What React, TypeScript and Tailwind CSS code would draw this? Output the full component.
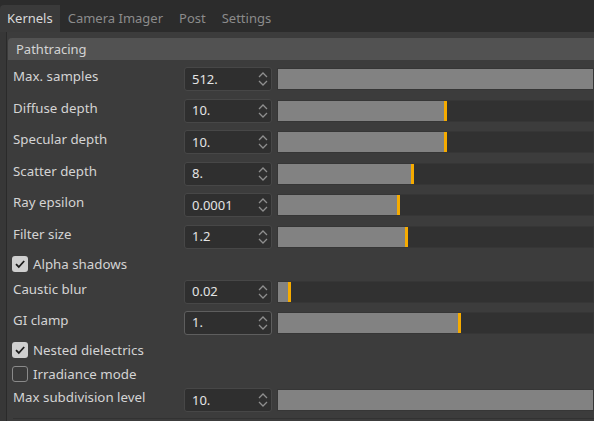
import React from 'react';

type Row =
  | { kind: 'slider'; label: string; value: string; fill: number; marker: boolean; h: string; focus?: boolean }
  | { kind: 'check'; label: string; checked: boolean; h: string };

const rows: Row[] = [
  { kind: 'slider', label: 'Max. samples', value: '512.', fill: 315, marker: false, h: 'h-[31.5px]' },
  { kind: 'slider', label: 'Diffuse depth', value: '10.', fill: 166, marker: true, h: 'h-[31.5px]' },
  { kind: 'slider', label: 'Specular depth', value: '10.', fill: 166, marker: true, h: 'h-[31.5px]' },
  { kind: 'slider', label: 'Scatter depth', value: '8.', fill: 133, marker: true, h: 'h-[31.5px]' },
  { kind: 'slider', label: 'Ray epsilon', value: '0.0001', fill: 119, marker: true, h: 'h-[31.5px]' },
  { kind: 'slider', label: 'Filter size', value: '1.2', fill: 127, marker: true, h: 'h-[31.5px]' },
  { kind: 'check', label: 'Alpha shadows', checked: true, h: 'h-[23.5px]' },
  { kind: 'slider', label: 'Caustic blur', value: '0.02', fill: 10, marker: true, h: 'h-[31px]' },
  { kind: 'slider', label: 'GI clamp', value: '1.', fill: 180, marker: true, h: 'h-[31px]', focus: true },
  { kind: 'check', label: 'Nested dielectrics', checked: true, h: 'h-[24px]' },
  { kind: 'check', label: 'Irradiance mode', checked: false, h: 'h-[24px]' },
  { kind: 'slider', label: 'Max subdivision level', value: '10.', fill: 315, marker: false, h: 'h-[28px]' },
];

const Spinner = () => (
  <svg width="12" height="18" viewBox="0 0 12 18" className="shrink-0">
    <path d="M2 7 L6 3 L10 7" fill="none" stroke="#8e8e8e" strokeWidth="1.3" />
    <path d="M2 11 L6 15 L10 11" fill="none" stroke="#8e8e8e" strokeWidth="1.3" />
  </svg>
);

const SpinBox = ({ value, focus }: { value: string; focus?: boolean }) => (
  <div
    className={`w-[88px] h-[24px] shrink-0 rounded-[3px] border bg-[#2f2f2f] flex items-center pl-[7px] pr-[2px] ${
      focus ? 'border-[#5e5e5e]' : 'border-[#474747]'
    }`}
  >
    <span className="flex-1 text-[13px] text-[#e4e4e4] leading-none">{value}</span>
    <Spinner />
  </div>
);

const Slider = ({ fill, marker }: { fill: number; marker: boolean }) => (
  <div className="flex-1 h-[22px] ml-[5px] mr-[1px] border border-[#363636] bg-[#313131] flex">
    <div className="h-full bg-[#828282]" style={{ width: fill }} />
    {marker && <div className="h-full w-[3px] bg-[#f6ab00]" />}
  </div>
);

const CheckBox = ({ checked }: { checked: boolean }) =>
  checked ? (
    <div className="w-[16px] h-[16px] rounded-[3px] bg-[#cfcfcf] flex items-center justify-center">
      <svg width="12" height="12" viewBox="0 0 12 12">
        <path d="M2 6.2 L4.8 9 L10.2 3" fill="none" stroke="#1c1c1c" strokeWidth="1.8" />
      </svg>
    </div>
  ) : (
    <div className="w-[16px] h-[16px] rounded-[3px] border border-[#8a8a8a] bg-[#3a3a3a]" />
  );

export default function App() {
  return (
    <div
      className="w-[594px] h-[421px] overflow-hidden bg-[#2c2c2c] flex flex-col"
      style={{ fontFamily: '"Noto Sans", "Noto Sans CJK KR", sans-serif' }}
    >
      {/* Tabs */}
      <div className="h-[32px] pt-[5px] flex items-stretch text-[13px] shrink-0">
        <div className="bg-[#3a3a3a] rounded-tl-[4px] px-[7px] pt-[1px] flex items-center text-[#d9d9d9]">Kernels</div>
        <div className="px-[8px] pt-[1px] flex items-center text-[#8b8b8b]">Camera Imager</div>
        <div className="px-[8px] pt-[1px] flex items-center text-[#8b8b8b]">Post</div>
        <div className="px-[8px] pt-[1px] flex items-center text-[#8b8b8b]">Settings</div>
      </div>

      {/* Body */}
      <div className="flex-1 flex">
        <div className="w-[7px] bg-[#373737] border-r border-[#2a2a2a] shrink-0" />
        <div className="flex-1 bg-[#3c3c3c] pt-[6px] pl-[1px] flex flex-col">
          <div className="h-[22px] bg-[#525252] rounded-tl-[4px] pl-[8px] pt-[2px] flex items-center text-[13px] text-[#d4d4d4]">
            Pathtracing
          </div>
          <div className="pt-[3.5px] flex flex-col">
            {rows.map((r) =>
              r.kind === 'slider' ? (
                <div key={r.label} className={`${r.h} flex items-center`}>
                  <div className="w-[176px] shrink-0 pl-[5px] pb-[6px] text-[13.3px] text-[#d4d4d4] leading-[18px]">
                    {r.label}
                  </div>
                  <SpinBox value={r.value} focus={r.focus} />
                  <Slider fill={r.fill} marker={r.marker} />
                </div>
              ) : (
                <div key={r.label} className={`${r.h} flex items-center pl-[4px] gap-[5px]`}>
                  <CheckBox checked={r.checked} />
                  <span className="text-[13.3px] text-[#d4d4d4] leading-[18px]">{r.label}</span>
                </div>
              )
            )}
          </div>
          <div className="mt-[4px] ml-[5px] border-t border-[#323232]" />
        </div>
      </div>
    </div>
  );
}
